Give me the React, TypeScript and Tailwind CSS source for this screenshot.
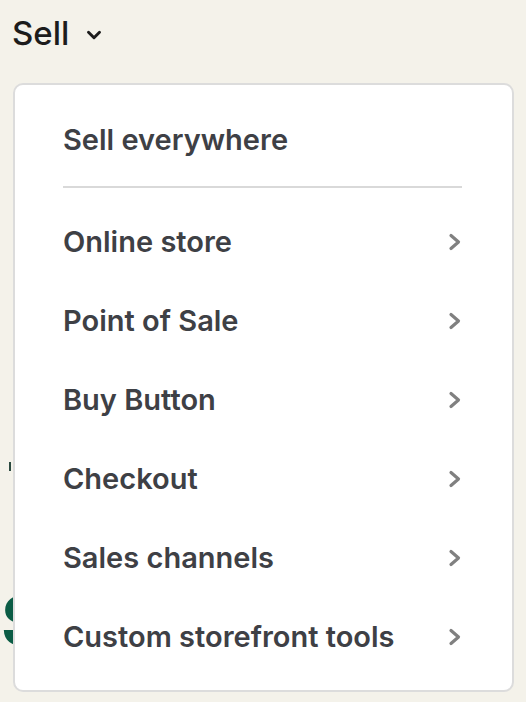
import { ChevronDown } from 'lucide-react';

const items = [
  'Online store',
  'Point of Sale',
  'Buy Button',
  'Checkout',
  'Sales channels',
  'Custom storefront tools',
];

function ChevronRight() {
  return (
    <svg width="14" height="18" viewBox="0 0 14 18" fill="none">
      <path d="M3 2.5 L10.5 9 L3 15.5" stroke="#808080" strokeWidth="3.2" strokeLinecap="round" strokeLinejoin="round" />
    </svg>
  );
}

export default function App() {
  return (
    <div className="relative w-[526px] h-[702px] overflow-hidden bg-[#f4f2ea]" style={{ fontFamily: 'Inter, "Noto Sans", sans-serif' }}>
      {/* page content behind the menu */}
      <div className="absolute left-[1px] top-[586px] text-[68px] font-bold leading-none text-[#0b5c45]">S</div>
      <div className="absolute left-[9px] top-[462px] w-[2px] h-[9px] bg-[#2b4a40]" />

      <div className="flex items-center gap-[14px] pl-[12px] pt-[17px] h-[50px]">
        <span className="text-[33px] font-medium text-[#1c1c1c] leading-none">Sell</span>
        <ChevronDown className="w-[22px] h-[22px] text-[#1c1c1c] mt-[2px]" strokeWidth={3.2} />
      </div>

      {/* dropdown */}
      <div className="absolute left-[13px] top-[83px] w-[501px] h-[609px] bg-white border-2 border-[#dcdcdc] rounded-[10px] pl-[48px] pr-[50px]">
        <div className="h-[103px] flex items-center pt-[8px] border-b-2 border-[#d9d9d9]">
          <span className="text-[29px] font-semibold text-[#3e4045]">Sell everywhere</span>
        </div>
        <div className="flex flex-col pt-[14px]">
          {items.map(label => (
            <div key={label} className="h-[79px] flex items-center justify-between">
              <span className="text-[29px] font-semibold text-[#3e4045]">{label}</span>
              <ChevronRight />
            </div>
          ))}
        </div>
      </div>
    </div>
  );
}
